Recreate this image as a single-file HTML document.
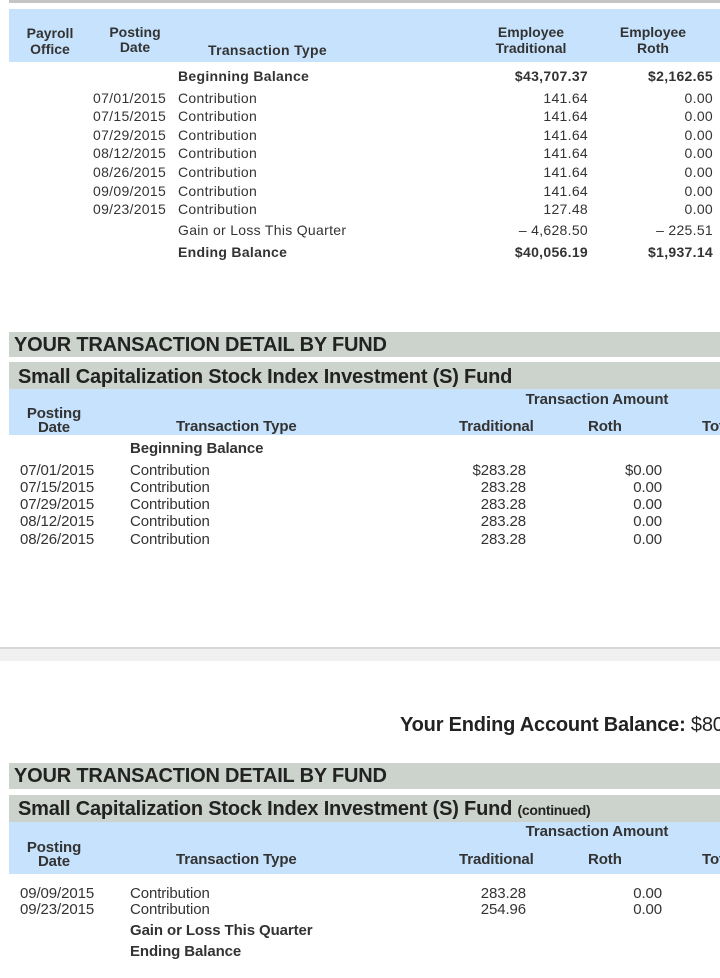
<!DOCTYPE html>
<html><head><meta charset="utf-8"><style>
body{margin:0;width:720px;height:978px;background:#fff;position:relative;overflow:hidden;font-family:"Liberation Sans",Arial,sans-serif;color:#333;}
#w{position:absolute;left:0;top:0;width:720px;height:978px;overflow:hidden;}
#w div{position:absolute;white-space:nowrap;}
.t{font-size:14px;line-height:16px;letter-spacing:0.3px;}
.n{font-size:15px;line-height:16px;letter-spacing:-0.1px;}
.b{font-weight:bold;}
.r{text-align:right;}
.c{text-align:center;}
.blue{background:#c6e2fc;}
.gray{background:#ccd3cc;}
.h{font-size:20px;font-weight:bold;line-height:24px;letter-spacing:-0.2px;color:#222;}
</style></head><body><div id="w">
<div style="left:9px;top:0;width:711px;height:3px;background:#c4c6c4"></div>
<div class="blue" style="left:9px;top:9px;width:711px;height:53px"></div>
<div class="t b c" style="left:20px;top:25px;width:60px;letter-spacing:0">Payroll<br>Office</div>
<div class="t b c" style="left:100px;top:25px;width:70px;line-height:15px;letter-spacing:0">Posting<br>Date</div>
<div class="t b" style="left:208px;top:42px">Transaction Type</div>
<div class="t b c" style="left:481px;top:24px;width:100px;letter-spacing:0">Employee<br>Traditional</div>
<div class="t b c" style="left:603px;top:24px;width:100px;letter-spacing:0">Employee<br>Roth</div>

<div class="t b" style="left:178px;top:68px">Beginning Balance</div>
<div class="t b r" style="left:480px;top:68px;width:108px">$43,707.37</div>
<div class="t b r" style="left:600px;top:68px;width:113px">$2,162.65</div>

<div class="t" style="left:93px;top:90px">07/01/2015</div><div class="t" style="left:178px;top:90px">Contribution</div><div class="t r" style="left:480px;top:90px;width:108px">141.64</div><div class="t r" style="left:600px;top:90px;width:113px">0.00</div>
<div class="t" style="left:93px;top:108px">07/15/2015</div><div class="t" style="left:178px;top:108px">Contribution</div><div class="t r" style="left:480px;top:108px;width:108px">141.64</div><div class="t r" style="left:600px;top:108px;width:113px">0.00</div>
<div class="t" style="left:93px;top:127px">07/29/2015</div><div class="t" style="left:178px;top:127px">Contribution</div><div class="t r" style="left:480px;top:127px;width:108px">141.64</div><div class="t r" style="left:600px;top:127px;width:113px">0.00</div>
<div class="t" style="left:93px;top:145px">08/12/2015</div><div class="t" style="left:178px;top:145px">Contribution</div><div class="t r" style="left:480px;top:145px;width:108px">141.64</div><div class="t r" style="left:600px;top:145px;width:113px">0.00</div>
<div class="t" style="left:93px;top:164px">08/26/2015</div><div class="t" style="left:178px;top:164px">Contribution</div><div class="t r" style="left:480px;top:164px;width:108px">141.64</div><div class="t r" style="left:600px;top:164px;width:113px">0.00</div>
<div class="t" style="left:93px;top:183px">09/09/2015</div><div class="t" style="left:178px;top:183px">Contribution</div><div class="t r" style="left:480px;top:183px;width:108px">141.64</div><div class="t r" style="left:600px;top:183px;width:113px">0.00</div>
<div class="t" style="left:93px;top:201px">09/23/2015</div><div class="t" style="left:178px;top:201px">Contribution</div><div class="t r" style="left:480px;top:201px;width:108px">127.48</div><div class="t r" style="left:600px;top:201px;width:113px">0.00</div>
<div class="t" style="left:178px;top:222px">Gain or Loss This Quarter</div><div class="t r" style="left:480px;top:222px;width:108px">– 4,628.50</div><div class="t r" style="left:600px;top:222px;width:113px">– 225.51</div>
<div class="t b" style="left:178px;top:244px">Ending Balance</div>
<div class="t b r" style="left:480px;top:244px;width:108px">$40,056.19</div>
<div class="t b r" style="left:600px;top:244px;width:113px">$1,937.14</div>

<!-- section 2 -->
<div class="gray" style="left:9px;top:332px;width:711px;height:25px"></div>
<div class="h" style="left:14px;top:333px">YOUR TRANSACTION DETAIL BY FUND</div>
<div class="gray" style="left:9px;top:362px;width:711px;height:27px"></div>
<div class="h" style="left:18px;top:365px">Small Capitalization Stock Index Investment (S) Fund</div>
<div class="blue" style="left:9px;top:389px;width:711px;height:46px"></div>
<div class="n b c" style="left:494px;top:392px;width:206px">Transaction Amount</div>
<div class="n b c" style="left:20px;top:407px;width:68px;line-height:14px">Posting<br>Date</div>
<div class="n b" style="left:176px;top:419px">Transaction Type</div>
<div class="n b" style="left:459px;top:419px">Traditional</div>
<div class="n b" style="left:588px;top:419px">Roth</div>
<div class="n b" style="left:702px;top:419px">Total</div>
<div class="n b" style="left:130px;top:441px">Beginning Balance</div>
<div class="n" style="left:20px;top:463px">07/01/2015</div><div class="n" style="left:130px;top:463px">Contribution</div><div class="n r" style="left:440px;top:463px;width:86px">$283.28</div><div class="n r" style="left:590px;top:463px;width:72px">$0.00</div>
<div class="n" style="left:20px;top:480px">07/15/2015</div><div class="n" style="left:130px;top:480px">Contribution</div><div class="n r" style="left:440px;top:480px;width:86px">283.28</div><div class="n r" style="left:590px;top:480px;width:72px">0.00</div>
<div class="n" style="left:20px;top:497px">07/29/2015</div><div class="n" style="left:130px;top:497px">Contribution</div><div class="n r" style="left:440px;top:497px;width:86px">283.28</div><div class="n r" style="left:590px;top:497px;width:72px">0.00</div>
<div class="n" style="left:20px;top:514px">08/12/2015</div><div class="n" style="left:130px;top:514px">Contribution</div><div class="n r" style="left:440px;top:514px;width:86px">283.28</div><div class="n r" style="left:590px;top:514px;width:72px">0.00</div>
<div class="n" style="left:20px;top:532px">08/26/2015</div><div class="n" style="left:130px;top:532px">Contribution</div><div class="n r" style="left:440px;top:532px;width:86px">283.28</div><div class="n r" style="left:590px;top:532px;width:72px">0.00</div>

<div style="left:0;top:647px;width:720px;height:2px;background:#d8d8d8"></div>
<div style="left:0;top:649px;width:720px;height:12px;background:#f0f0f0"></div>

<div class="h" style="left:400px;top:713px">Your Ending Account Balance: <span style="font-weight:normal">$80,000.00</span></div>

<!-- section 3 -->
<div class="gray" style="left:9px;top:763px;width:711px;height:26px"></div>
<div class="h" style="left:14px;top:764px">YOUR TRANSACTION DETAIL BY FUND</div>
<div class="gray" style="left:9px;top:795px;width:711px;height:27px"></div>
<div class="h" style="left:18px;top:797px">Small Capitalization Stock Index Investment (S) Fund <span style="font-size:14px;letter-spacing:-0.3px">(continued)</span></div>
<div class="blue" style="left:9px;top:822px;width:711px;height:52px"></div>
<div class="n b c" style="left:494px;top:824px;width:206px">Transaction Amount</div>
<div class="n b c" style="left:20px;top:841px;width:68px;line-height:14px">Posting<br>Date</div>
<div class="n b" style="left:176px;top:852px">Transaction Type</div>
<div class="n b" style="left:459px;top:852px">Traditional</div>
<div class="n b" style="left:588px;top:852px">Roth</div>
<div class="n b" style="left:702px;top:852px">Total</div>
<div class="n" style="left:20px;top:886px">09/09/2015</div><div class="n" style="left:130px;top:886px">Contribution</div><div class="n r" style="left:440px;top:886px;width:86px">283.28</div><div class="n r" style="left:590px;top:886px;width:72px">0.00</div>
<div class="n" style="left:20px;top:902px">09/23/2015</div><div class="n" style="left:130px;top:902px">Contribution</div><div class="n r" style="left:440px;top:902px;width:86px">254.96</div><div class="n r" style="left:590px;top:902px;width:72px">0.00</div>
<div class="n b" style="left:130px;top:923px">Gain or Loss This Quarter</div>
<div class="n b" style="left:130px;top:944px">Ending Balance</div>
</div></body></html>
